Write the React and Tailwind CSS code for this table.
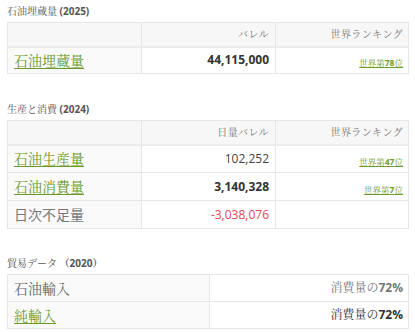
import React from "react";

const serif = "font-['Open_Sans','Noto_Serif_CJK_JP',serif]";
const sans = "font-['Open_Sans','Noto_Sans_CJK_JP',sans-serif]";

function Title({ name, year }) {
  return (
    <div className={`${serif} text-[10px] leading-[14px] text-[#555] mb-1`}>
      {name} <span className="font-bold">{year}</span>
    </div>
  );
}

function Rank({ n }) {
  return (
    <a className="text-[8.5px] text-[#6b9a2a] underline">
      世界第<span className="font-bold">{n}</span>位
    </a>
  );
}

function HeaderRow({ unit }) {
  return (
    <tr className="h-[24px] bg-[#f7f7f7] border-b-2 border-[#ececec]">
      <th className="border border-[#e6e6e6] w-[134px]"></th>
      <th className="border border-[#e6e6e6] w-[134px] text-right pr-[6px] font-normal text-[10px] text-[#777] tracking-[0.4px]">
        {unit}
      </th>
      <th className="border border-[#e6e6e6] text-right pr-[5px] font-normal text-[10px] text-[#777] tracking-[0.4px]">
        世界ランキング
      </th>
    </tr>
  );
}

function Label({ children, link }) {
  return (
    <td className="border border-[#e6e6e6] bg-[#fafafa] pl-[6px] text-[14px]">
      {link ? (
        <a className="text-[#6b9a2a] underline underline-offset-2">{children}</a>
      ) : (
        children
      )}
    </td>
  );
}

export default function App() {
  return (
    <div className={`${serif} bg-white w-[415px] h-[332px] pt-[4px] px-[7px]`}>
      {/* 石油埋蔵量 */}
      <Title name="石油埋蔵量" year="(2025)" />
      <table className="w-[402px] border-collapse table-fixed">
        <tbody>
          <HeaderRow unit="バレル" />
          <tr className="h-[27px]">
            <Label link>石油埋蔵量</Label>
            <td className={`${sans} border border-[#e6e6e6] text-right pr-[6px] text-[12px] font-bold text-[#333]`}>
              44,115,000
            </td>
            <td className="border border-[#e6e6e6] text-right pr-[5px]">
              <Rank n="78" />
            </td>
          </tr>
        </tbody>
      </table>

      {/* 生産と消費 */}
      <div className="mt-[28px]">
        <Title name="生産と消費" year="(2024)" />
        <table className="w-[402px] border-collapse table-fixed">
          <tbody>
            <HeaderRow unit="日量バレル" />
            <tr className="h-[28px]">
              <Label link>石油生産量</Label>
              <td className={`${sans} border border-[#e6e6e6] text-right pr-[6px] text-[12px] text-[#444]`}>
                102,252
              </td>
              <td className="border border-[#e6e6e6] text-right pr-[5px]">
                <Rank n="47" />
              </td>
            </tr>
            <tr className="h-[28px]">
              <Label link>石油消費量</Label>
              <td className={`${sans} border border-[#e6e6e6] text-right pr-[6px] text-[12px] font-bold text-[#333]`}>
                3,140,328
              </td>
              <td className="border border-[#e6e6e6] text-right pr-[5px]">
                <Rank n="7" />
              </td>
            </tr>
            <tr className="h-[28px]">
              <td className={`${sans} border border-[#e6e6e6] bg-[#fafafa] pl-[6px] text-[14px] text-[#777]`}>
                日次不足量
              </td>
              <td className={`${sans} border border-[#e6e6e6] text-right pr-[6px] text-[12px] text-[#e2474f]`}>
                -3,038,076
              </td>
              <td className="border border-[#e6e6e6]"></td>
            </tr>
          </tbody>
        </table>
      </div>

      {/* 貿易データ */}
      <div className="mt-[27px]">
        <Title name="貿易データ" year="（2020）" />
        <table className="w-[402px] border-collapse table-fixed">
          <tbody>
            <tr className="h-[27px]">
              <td className="border border-[#e6e6e6] bg-[#fafafa] pl-[6px] text-[14px] text-[#666] w-[202px]">
                石油輸入
              </td>
              <td className="border border-[#e6e6e6] text-right pr-[5px] text-[12px] text-[#777]">
                消費量の<span className="font-bold">72%</span>
              </td>
            </tr>
            <tr className="h-[27px]">
              <Label link>純輸入</Label>
              <td className="border border-[#e6e6e6] text-right pr-[5px] text-[12px] text-[#333]">
                消費量の<span className="font-bold">72%</span>
              </td>
            </tr>
          </tbody>
        </table>
      </div>
    </div>
  );
}
